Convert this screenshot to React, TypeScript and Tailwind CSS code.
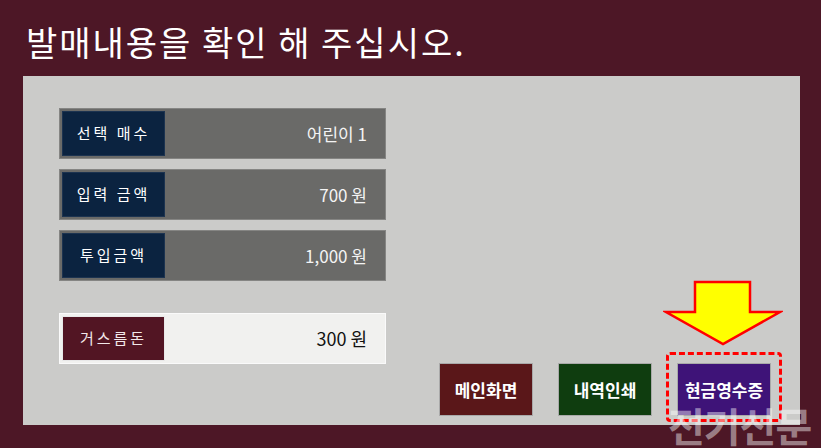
const font = { fontFamily: '"Noto Sans CJK KR", "Noto Sans", sans-serif' }

const rows = [
  { label: '선택 매수', value: '어린이 1' },
  { label: '입력 금액', value: '700 원' },
  { label: '투입금액', value: '1,000 원' },
]

function InfoRow({ label, value }: { label: string; value: string }) {
  return (
    <div className="flex h-[51px] w-[327px] items-center border border-[#858583] bg-[#6a6a68] p-[2px]">
      <div className="flex h-full w-[103px] items-center justify-center border border-[#1c3350] bg-[#0b2340] text-[15px] tracking-[3px] text-white">
        {label}
      </div>
      <div className="flex-1 pr-[16px] text-right text-[17px] text-[#f4f4f4]">{value}</div>
    </div>
  )
}

function ActionButton({ label, color }: { label: string; color: string }) {
  return (
    <button className={`flex h-[53px] w-[94px] items-center justify-center border border-[#a9a9a9] text-[17px] font-bold text-white ${color}`}>
      {label}
    </button>
  )
}

export default function App() {
  return (
    <div className="relative h-[448px] w-[821px] overflow-hidden bg-[#4d1726]" style={font}>
      <div className="flex h-[76px] items-start pl-[26px] pt-[20px] text-[34px] leading-[44px] tracking-[2px] text-white">
        발매내용을 확인 해 주십시오.
      </div>

      <div className="relative ml-[23px] flex h-[349px] w-[777px] bg-[#cbcbc9]">
        <div className="flex flex-col pl-[36px] pt-[32px]">
          <div className="flex flex-col gap-[10px]">
            {rows.map((r) => (
              <InfoRow key={r.label} label={r.label} value={r.value} />
            ))}
          </div>
          <div className="mt-[32px] flex h-[51px] w-[327px] items-center border border-[#fafafa] bg-[#f1f1ef] p-[2px]">
            <div className="flex h-full w-[103px] items-center justify-center border border-[#e8e8e8] bg-[#521523] text-[15px] tracking-[3px] text-[#f2e8ea]">
              거스름돈
            </div>
            <div className="flex-1 pr-[16px] text-right text-[18px] text-[#111]">300 원</div>
          </div>
        </div>

        <div className="mb-[9px] ml-auto mr-[29px] flex gap-[25px] self-end">
          <ActionButton label="메인화면" color="bg-[#5a1719]" />
          <ActionButton label="내역인쇄" color="bg-[#0f3d0f]" />
          <ActionButton label="현금영수증" color="bg-[#3e1378]" />
        </div>

        {/* highlight annotation */}
        <div className="absolute left-[643px] top-[276px] h-[70px] w-[116px] rounded-[4px] border-[3px] border-dashed border-[#ff0000]" />
        <svg className="absolute left-[640px] top-[204px]" width="120" height="66" viewBox="0 0 120 66">
          <polygon
            points="32,2 87,2 87,32 117,32 60,64 3,32 32,32"
            fill="#ffff00"
            stroke="#ff0000"
            strokeWidth="2.5"
            strokeLinejoin="miter"
          />
        </svg>
      </div>

      <div className="pointer-events-none absolute left-[668px] top-[401px] text-[40px] font-bold leading-[48px] tracking-[-1px] text-white/45">
        전기신문
      </div>
    </div>
  )
}
